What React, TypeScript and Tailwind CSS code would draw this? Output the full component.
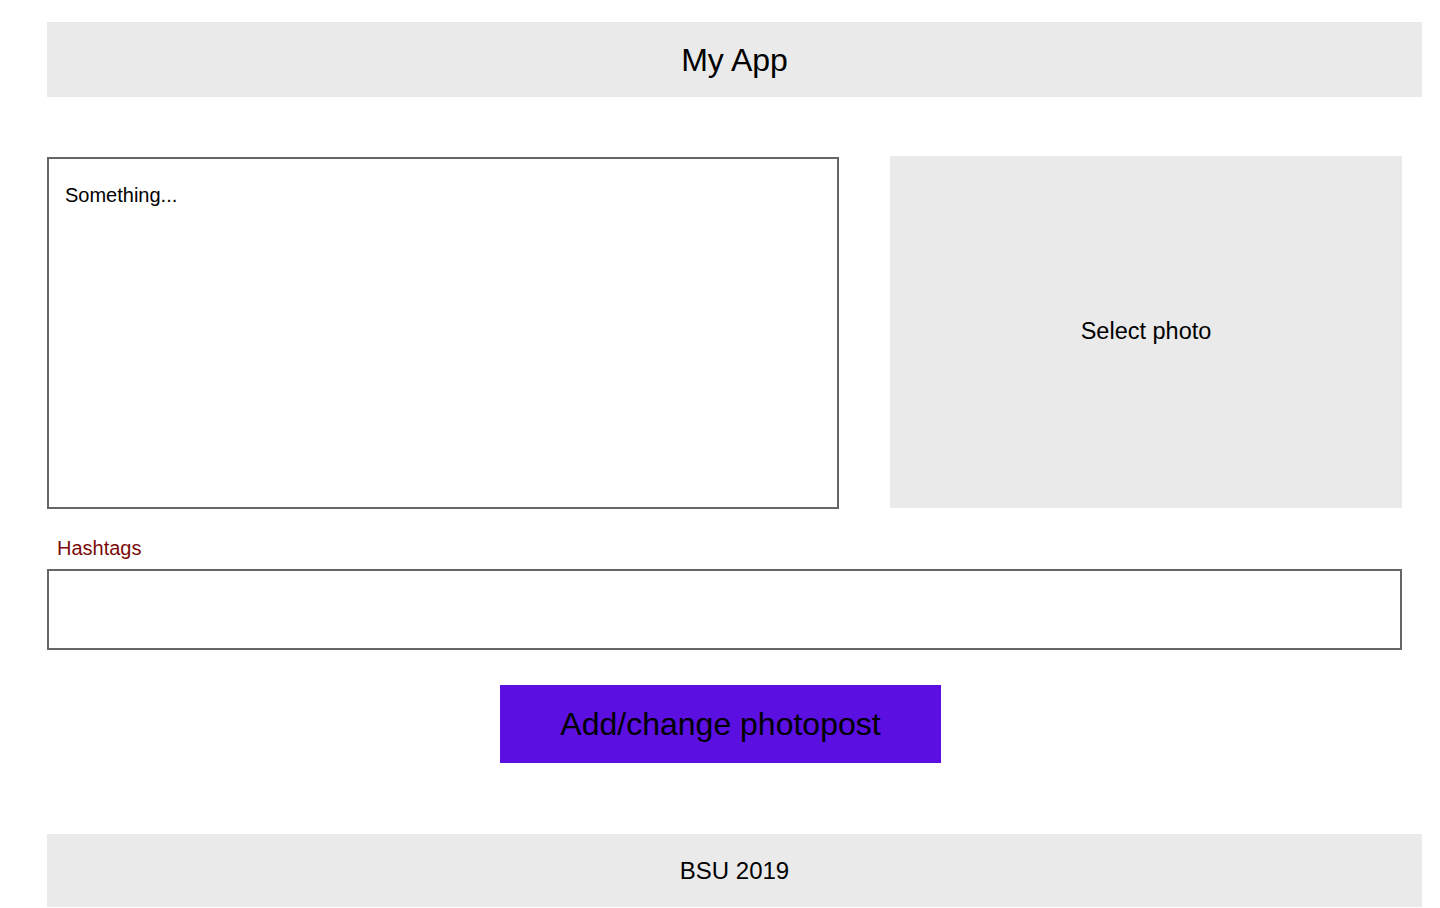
import { useState } from 'react';

const App = () => {
  const [text, setText] = useState('Something...');
  const [tags, setTags] = useState('');

  return (
    <div className="min-h-[908px] bg-white pl-[47px] pt-[22px] font-['Liberation_Sans',Arial,sans-serif] text-black">
      <header className="flex h-[75px] w-[1375px] items-center justify-center bg-[#eaeaea] text-[32px]">
        My App
      </header>

      <main className="mt-[59px] w-[1355px]">
        <div className="flex items-start">
          <textarea
            value={text}
            onChange={(e) => setText(e.target.value)}
            className="mt-px h-[352px] w-[792px] resize-none border-2 border-[#666] px-4 pt-[24px] text-[20px] leading-[24px] outline-none"
          />
          <button className="ml-[51px] flex h-[352px] w-[512px] items-center justify-center bg-[#eaeaea] text-[23.5px]">
            Select photo
          </button>
        </div>

        <label className="mt-[28px] block pl-[10px] text-[20px] leading-[22px] text-[#7a0a0a]">
          Hashtags
        </label>
        <input
          value={tags}
          onChange={(e) => setTags(e.target.value)}
          className="mt-[10px] block h-[81px] w-full border-2 border-[#666] px-4 text-[20px] outline-none"
        />

        <div className="mt-[35px] flex pl-[453px]">
          <button className="h-[78px] w-[441px] bg-[#5b0fe0] text-[32px] text-black">
            Add/change photopost
          </button>
        </div>
      </main>

      <footer className="mt-[71px] flex h-[73px] w-[1375px] items-center justify-center bg-[#eaeaea] text-[24px]">
        BSU 2019
      </footer>
    </div>
  );
};

export default App;
